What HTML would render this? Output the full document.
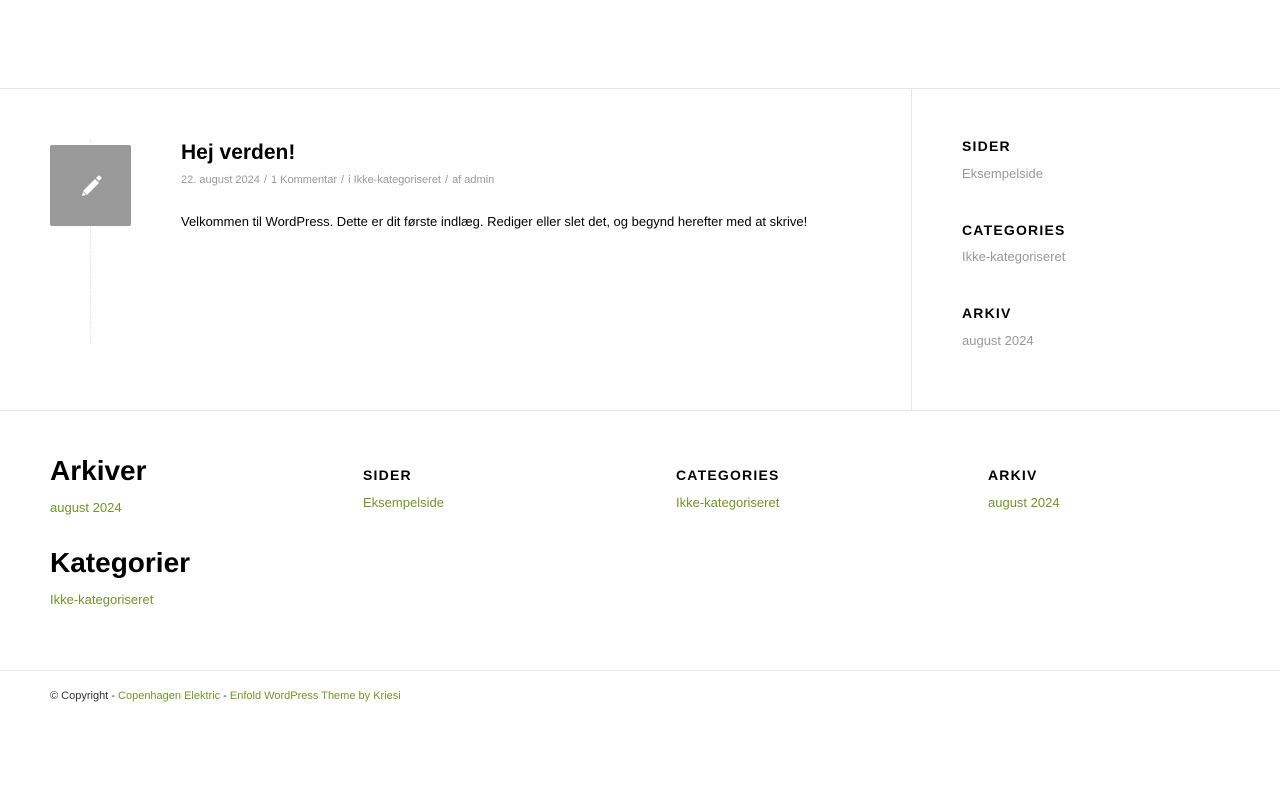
<!DOCTYPE html>
<html><head><meta charset="utf-8"><style>
*{margin:0;padding:0;box-sizing:border-box}
body{width:1280px;height:800px;background:#fff;font-family:"Liberation Sans",Arial,sans-serif;position:relative;overflow:hidden;color:#000}
.a{position:absolute;white-space:nowrap}
.hl{position:absolute;left:0;width:1280px;height:1px;background:#e6e6e6}
.w{font-size:14px;font-weight:bold;letter-spacing:1.2px}
.g{color:#999;font-size:13px}
.gr{color:#719430;font-size:13px}
.s{margin:0 4px}
</style></head><body>
<div class="hl" style="top:88px"></div>
<div class="hl" style="top:410px"></div>
<div class="hl" style="top:670px"></div>
<div style="position:absolute;left:911px;top:89px;width:1px;height:321px;background:#e6e6e6"></div>
<div style="position:absolute;left:90px;top:140px;height:204px;border-left:1px dashed #e6e6e6"></div>
<div style="position:absolute;left:50px;top:145px;width:81px;height:81px;background:#999;border-radius:2px">
<svg width="81" height="81" viewBox="0 0 81 81" style="position:absolute;left:0;top:0"><path d="M45 34 L49 38 L37 50 L33 46 Z" fill="#fff"/><path d="M46 33 L48 31 Q49 30 50 31 L51 32 Q52 33 51 34 L49 36 Z" fill="#fff"/><path d="M33 47 L36 50 L32 51 Z" fill="#fff"/></svg></div>
<div class="a" style="left:181px;top:141px;font-size:21px;font-weight:bold">Hej verden!</div>
<div class="a" style="left:181px;top:174px;font-size:11px;color:#999">22. august 2024<span class="s">/</span>1 Kommentar<span class="s">/</span>i Ikke-kategoriseret<span class="s">/</span>af admin</div>
<div class="a" style="left:181px;top:214px;font-size:13px">Velkommen til WordPress. Dette er dit første indlæg. Rediger eller slet det, og begynd herefter med at skrive!</div>
<div class="a w" style="left:962px;top:138px">SIDER</div>
<div class="a g" style="left:962px;top:166px">Eksempelside</div>
<div class="a w" style="left:962px;top:222px">CATEGORIES</div>
<div class="a g" style="left:962px;top:249px">Ikke-kategoriseret</div>
<div class="a w" style="left:962px;top:305px">ARKIV</div>
<div class="a g" style="left:962px;top:333px">august 2024</div>
<div class="a" style="left:50px;top:455px;font-size:28px;font-weight:bold">Arkiver</div>
<div class="a gr" style="left:50px;top:500px">august 2024</div>
<div class="a" style="left:50px;top:547px;font-size:28px;font-weight:bold">Kategorier</div>
<div class="a gr" style="left:50px;top:592px">Ikke-kategoriseret</div>
<div class="a w" style="left:363px;top:467px">SIDER</div>
<div class="a gr" style="left:363px;top:495px">Eksempelside</div>
<div class="a w" style="left:676px;top:467px">CATEGORIES</div>
<div class="a gr" style="left:676px;top:495px">Ikke-kategoriseret</div>
<div class="a w" style="left:988px;top:467px">ARKIV</div>
<div class="a gr" style="left:988px;top:495px">august 2024</div>
<div class="a" style="left:50px;top:690px;font-size:11px;color:#333">© Copyright - <span style="color:#719430">Copenhagen Elektric</span> - <span style="color:#719430">Enfold WordPress Theme by Kriesi</span></div>
</body></html>
